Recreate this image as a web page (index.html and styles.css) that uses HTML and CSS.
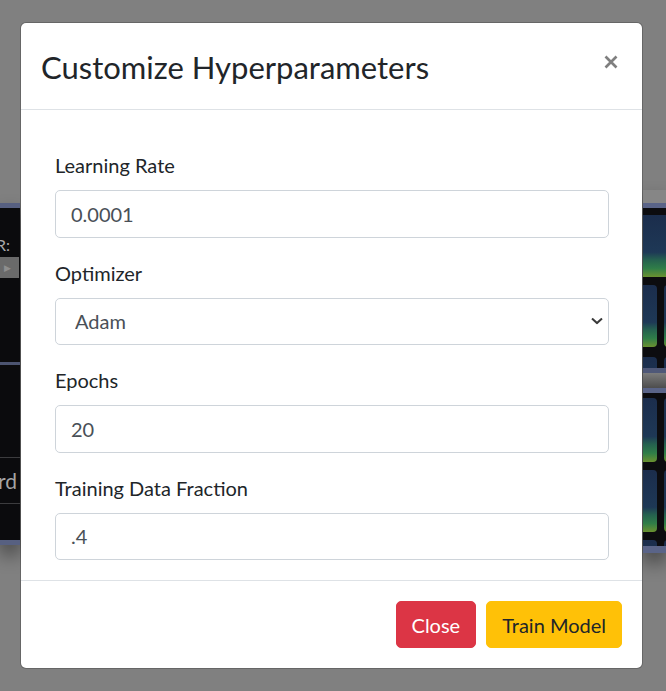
FILE: index.html
```html
<!DOCTYPE html>
<html lang="en">
<head>
<meta charset="utf-8">
<title>Customize Hyperparameters</title>
<link rel="stylesheet" href="styles.css">
</head>
<body>
  <div class="workspace">
    <aside class="sidebar">
      <section class="side-top">
        <div class="side-label">COLOR:</div>
        <div class="side-toggle">&#9654;</div>
      </section>
      <section class="side-bottom">
        <div class="side-row">Keyboard</div>
      </section>
    </aside>
    <main class="gallery">
      <div class="g-topbar"></div>
      <section class="g-section first">
        <div class="g-row"><div class="tile wide"></div></div>
        <div class="g-row"><div class="tile"></div><div class="tile"></div></div>
        <div class="g-row"><div class="tile"></div><div class="tile"></div></div>
      </section>
      <div class="g-header"></div>
      <section class="g-section second">
        <div class="g-row tall"><div class="tile"></div><div class="tile"></div></div>
        <div class="g-row"><div class="tile"></div><div class="tile"></div></div>
        <div class="g-row"><div class="tile"></div><div class="tile"></div></div>
      </section>
    </main>
  </div>

  <div class="modal" role="dialog" aria-labelledby="modalTitle">
    <header class="modal-header">
      <h4 class="modal-title" id="modalTitle">Customize Hyperparameters</h4>
      <button class="close-btn" type="button" aria-label="Close">
        <svg width="14" height="14" viewBox="0 0 14 14"><path d="M1.5 1.5 L12.5 12.5 M12.5 1.5 L1.5 12.5" /></svg>
      </button>
    </header>
    <div class="modal-body">
      <div class="form-group">
        <label class="form-label" for="lr">Learning Rate</label>
        <input class="form-control" id="lr" type="text" value="0.0001">
      </div>
      <div class="form-group">
        <label class="form-label" for="opt">Optimizer</label>
        <div class="select-wrap">
          <select class="form-control form-select" id="opt">
            <option>Adam</option>
            <option>SGD</option>
            <option>RMSprop</option>
          </select>
          <svg class="chevron" width="12" height="7" viewBox="0 0 12 7"><path d="M1 1 L6 5.6 L11 1" /></svg>
        </div>
      </div>
      <div class="form-group">
        <label class="form-label" for="ep">Epochs</label>
        <input class="form-control" id="ep" type="text" value="20">
      </div>
      <div class="form-group">
        <label class="form-label" for="frac">Training Data Fraction</label>
        <input class="form-control" id="frac" type="text" value=".4">
      </div>
    </div>
    <footer class="modal-footer">
      <button class="btn btn-danger" type="button">Close</button>
      <button class="btn btn-warning" type="button">Train Model</button>
    </footer>
  </div>
</body>
</html>
```
FILE: styles.css
```css
html, body {
  margin: 0;
  padding: 0;
}
body {
  background: #808080;
  font-family: Lato, "Open Sans", sans-serif;
  color: #212529;
  height: 691px;
  overflow: hidden;
}

/* ---------- dimmed background app ---------- */
.workspace {
  display: flex;
  justify-content: space-between;
  align-items: flex-start;
  padding-top: 190px;
}
.sidebar {
  width: 20px;
  margin-top: 13px;
  overflow: hidden;
  background: #0b0b0d;
  border-top: 5px solid #576081;
  border-bottom: 5px solid #576081;
  box-shadow: 0 10px 18px rgba(0, 0, 0, 0.45);
}
.side-top {
  height: 157px;
  padding-top: 27px;
  box-sizing: border-box;
  border-bottom: 3px solid #4c5470;
}
.side-label {
  display: flex;
  justify-content: flex-end;
  padding-right: 10px;
  font: 16px/20px Lato, sans-serif;
  color: #a9a9a9;
  white-space: nowrap;
}
.side-toggle {
  margin-top: 2px;
  width: 19px;
  height: 21px;
  background: #6a6a6a;
  color: #8e8e8e;
  font-size: 9px;
  line-height: 21px;
  text-indent: 4px;
}
.side-bottom {
  height: 175px;
  padding-top: 92px;
  box-sizing: border-box;
}
.side-row {
  display: flex;
  justify-content: flex-end;
  height: 47px;
  padding-right: 3px;
  border-top: 1px solid #3c3c3e;
  border-bottom: 1px solid #3c3c3e;
  font: 21px/45px Lato, sans-serif;
  color: #a4a4a4;
  white-space: nowrap;
  box-sizing: border-box;
}

.gallery {
  width: 23px;
  overflow: hidden;
  box-shadow: 0 10px 18px rgba(0, 0, 0, 0.45);
}
.g-topbar {
  height: 13px;
  background: #868686;
  border-bottom: 5px solid #5a6488;
}
.g-section {
  background: #0c0c0f;
  overflow: hidden;
  display: flex;
  flex-direction: column;
}
.g-section.first {
  height: 160px;
  padding-top: 7px;
  box-sizing: border-box;
  gap: 8px;
}
.g-section.first .g-row:nth-child(3) {
  margin-top: 2px;
}
.g-section.second {
  height: 160px;
  padding-top: 5px;
  box-sizing: border-box;
  gap: 8px;
  border-bottom: 7px solid #5a6488;
}
.g-row {
  display: flex;
  gap: 7px;
  height: 62px;
  flex: none;
}
.g-row.tall {
  height: 64px;
}
.tile {
  flex: none;
  width: 14px;
  height: 100%;
  border-radius: 0 4px 4px 0;
  background: linear-gradient(180deg, #1b2d4c 0%, #1e3856 60%, #25604f 72%, #2f7d48 86%, #6a9130 100%);
}
.tile + .tile {
  border-radius: 4px 0 0 4px;
}
.tile.wide {
  width: 23px;
  border-radius: 0;
}
.g-header {
  height: 15px;
  border-top: 5px solid #4f5878;
  border-bottom: 5px solid #5a6488;
  background: linear-gradient(180deg, #7c7c7c, #4d4d4d);
}

/* ---------- modal ---------- */
.modal {
  position: absolute;
  top: 22px;
  left: 20px;
  width: 623px;
  box-sizing: border-box;
  background: #fff;
  border: 1px solid rgba(0, 0, 0, 0.2);
  border-radius: 6px;
  background-clip: padding-box;
}
.modal-header {
  display: flex;
  align-items: flex-start;
  padding: 22px 20px 19px;
  border-bottom: 1px solid #dee2e6;
}
.modal-title {
  margin: 0;
  font-size: 31px;
  font-weight: 400;
  line-height: 45px;
  color: #212529;
}
.close-btn {
  margin: 10px 4px 0 auto;
  padding: 0;
  border: 0;
  background: none;
  display: flex;
}
.close-btn path {
  fill: none;
  stroke: #7f7f7f;
  stroke-width: 2.7;
}

.modal-body {
  padding: 40px 33px 0 34px;
}
.form-group {
  margin-bottom: 20px;
}
.form-label {
  display: block;
  margin-bottom: 10px;
  font-size: 20px;
  line-height: 30px;
  color: #212529;
}
.form-control {
  display: block;
  width: 100%;
  height: 47.5px;
  box-sizing: border-box;
  padding: 7.5px 15px;
  font-family: Lato, "Open Sans", sans-serif;
  font-size: 20px;
  line-height: 30px;
  color: #495057;
  background: #fff;
  border: 1px solid #ced4da;
  border-radius: 5px;
  outline: none;
}
.select-wrap {
  position: relative;
}
.form-select {
  appearance: none;
  -webkit-appearance: none;
  padding-left: 19px;
}
.chevron {
  position: absolute;
  right: 6px;
  top: 50%;
  transform: translateY(-50%);
  pointer-events: none;
}
.chevron path {
  fill: none;
  stroke: #3a3a3a;
  stroke-width: 2;
}

.modal-footer {
  display: flex;
  justify-content: flex-end;
  align-items: center;
  padding: 15px;
  border-top: 1px solid #dee2e6;
}
.btn {
  margin: 5px;
  padding: 7.5px 15px;
  font-family: Lato, "Open Sans", sans-serif;
  font-size: 20px;
  line-height: 30px;
  border: 1px solid transparent;
  border-radius: 5px;
}
.btn-danger {
  background: #dc3545;
  border-color: #dc3545;
  color: #fff;
}
.btn-warning {
  background: #ffc107;
  border-color: #ffc107;
  color: #212529;
}
```
